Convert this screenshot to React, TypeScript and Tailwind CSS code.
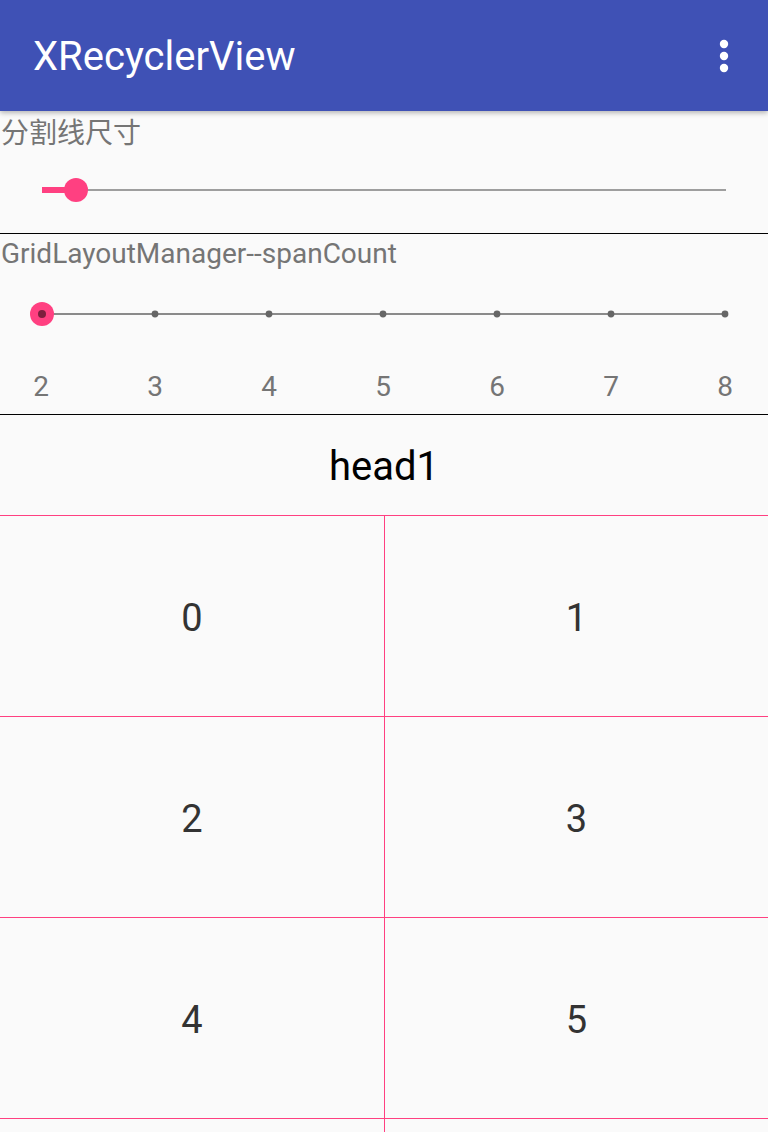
const ticks = [41, 155, 269, 383, 497, 611, 725];
const spanLabels = ["2", "3", "4", "5", "6", "7", "8"];
const items = ["0", "1", "2", "3", "4", "5"];

const OverflowIcon = () => (
  <svg width="12" height="36" viewBox="0 0 12 36">
    <circle cx="6" cy="6" r="4.2" fill="#fff" />
    <circle cx="6" cy="18" r="4.2" fill="#fff" />
    <circle cx="6" cy="30" r="4.2" fill="#fff" />
  </svg>
);

const App = () => {
  return (
    <div className="w-[768px] h-[1132px] overflow-hidden bg-[#fafafa] font-['Roboto','Noto_Sans_CJK_SC',sans-serif]">
      {/* toolbar */}
      <div className="relative z-10 h-[111px] bg-[#3f51b5] flex items-center justify-between pl-[33px] pr-[38px] shadow-[0_2px_5px_rgba(0,0,0,0.28)]">
        <h1 className="text-[40px] text-white leading-none pt-[3px]">XRecyclerView</h1>
        <OverflowIcon />
      </div>

      {/* divider size */}
      <div className="h-[122px] flex flex-col">
        <p className="h-[36px] leading-[36px] pt-[2px] pl-[1px] text-[28px] text-[#757575] font-['Noto_Sans_CJK_SC',sans-serif]">
          分割线尺寸
        </p>
        <svg width="768" height="86" viewBox="0 0 768 86">
          <line x1="76" y1="43" x2="726" y2="43" stroke="#9e9e9e" strokeWidth="2" />
          <line x1="42" y1="43" x2="76" y2="43" stroke="#ff4081" strokeWidth="6" />
          <circle cx="76" cy="43" r="12" fill="#ff4081" />
        </svg>
      </div>
      <div className="h-px bg-black" />

      {/* span count */}
      <div className="h-[180px] flex flex-col">
        <p className="h-[38px] leading-[36px] pt-[2px] pl-[1px] text-[28px] text-[#757575]">
          GridLayoutManager--spanCount
        </p>
        <svg width="768" height="60" viewBox="0 0 768 60">
          <line x1="41" y1="42" x2="725" y2="42" stroke="#8a8a8a" strokeWidth="2" />
          {ticks.map((x) => (
            <circle key={x} cx={x} cy="42" r="3.4" fill="#666" />
          ))}
          <circle cx="42" cy="42" r="12" fill="#ff4081" />
          <circle cx="42" cy="42" r="4" fill="#7d1f3e" />
        </svg>
        <div className="mt-[37px] flex justify-between pl-[21px] pr-[23px]">
          {spanLabels.map((l) => (
            <span key={l} className="w-[40px] text-center text-[28px] leading-[36px] text-[#757575]">
              {l}
            </span>
          ))}
        </div>
      </div>
      <div className="h-px bg-black" />

      {/* header item */}
      <div className="h-[100px] flex items-center justify-center pt-[3px]">
        <span className="text-[40px] text-black leading-none">head1</span>
      </div>

      {/* grid */}
      <div className="grid grid-cols-[385px_383px] border-t border-[#ff4081]">
        {items.map((n, i) => (
          <div
            key={n}
            className={`h-[201px] flex items-center justify-center pt-[3px] border-b border-[#ff4081] ${
              i % 2 === 0 ? "border-r" : ""
            }`}
          >
            <span className="text-[38px] text-[#333333] leading-none">{n}</span>
          </div>
        ))}
        <div className="h-[201px] border-r border-[#ff4081]" />
        <div className="h-[201px]" />
      </div>
    </div>
  );
};

export default App;
